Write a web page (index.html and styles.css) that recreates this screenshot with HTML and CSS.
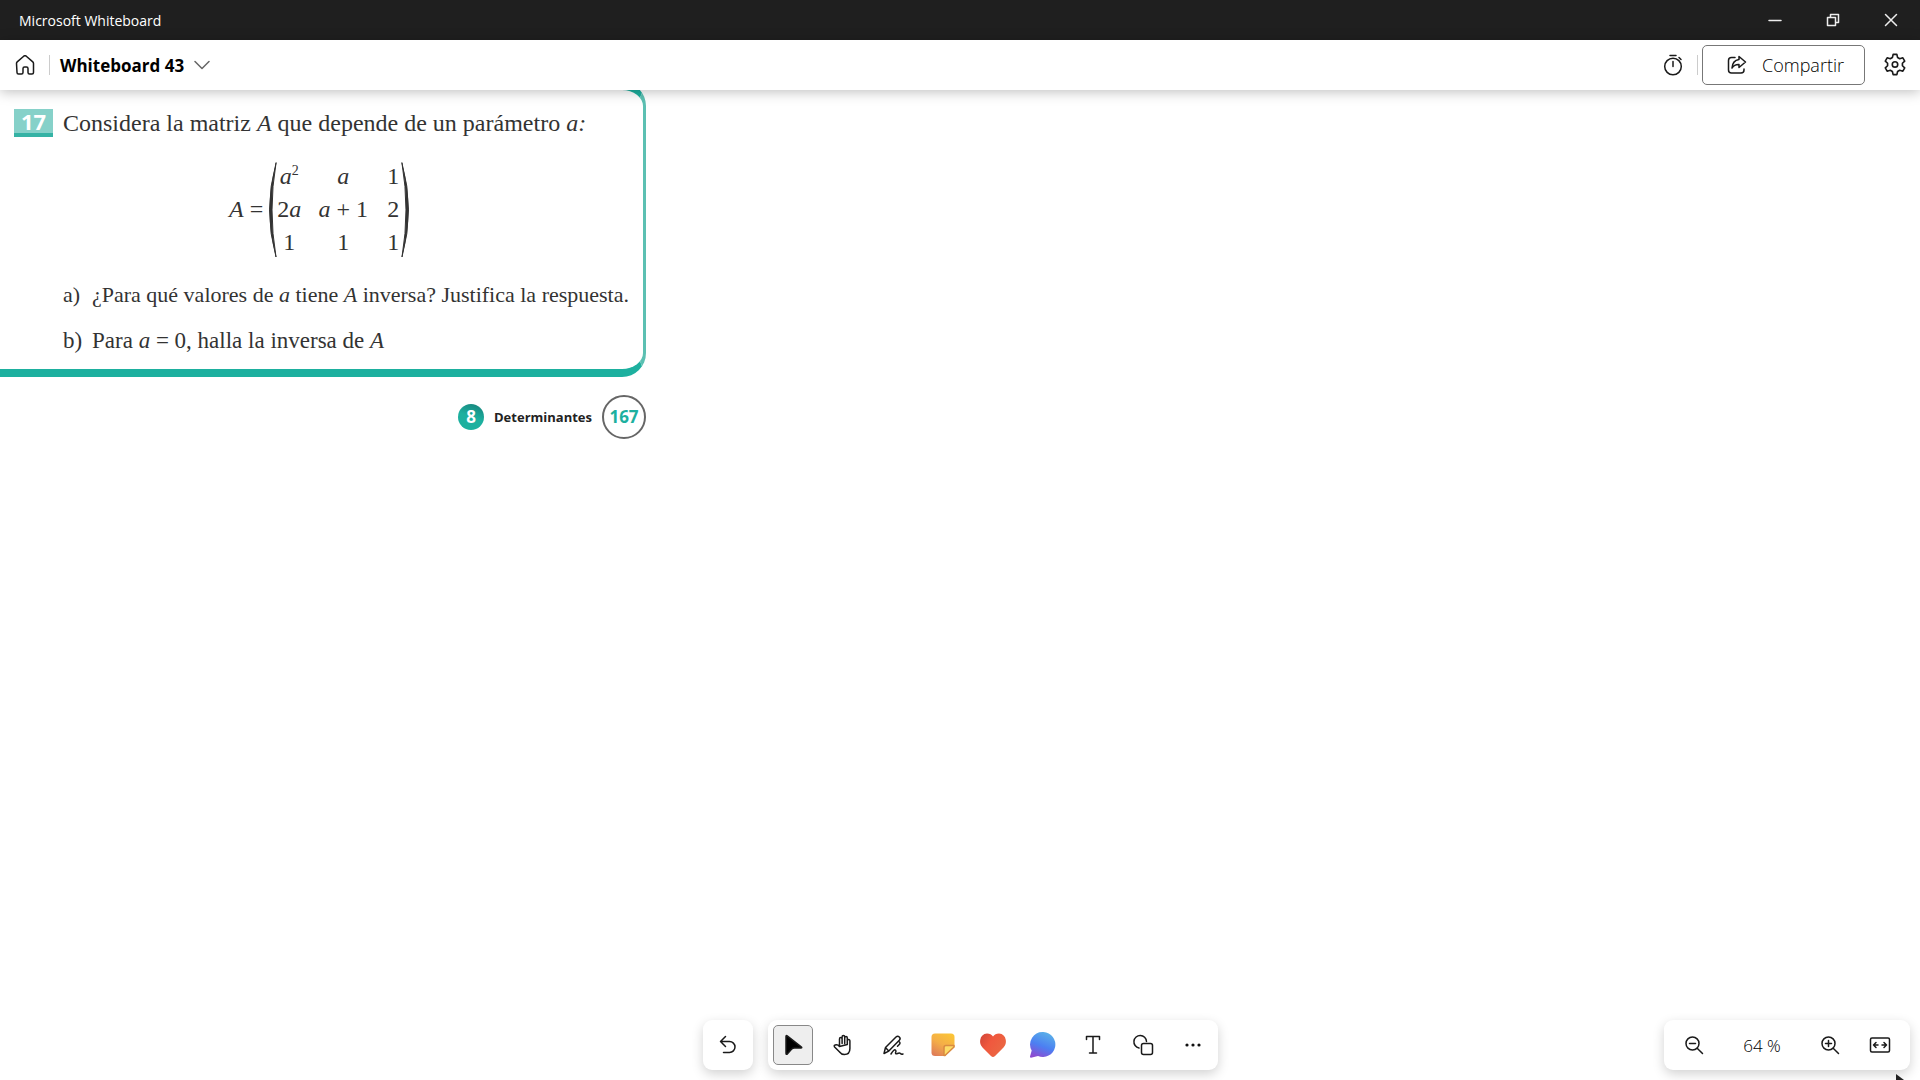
FILE: index.html
```
<!DOCTYPE html>
<html lang="es">
	<head>
	<meta charset="utf-8">
	<title>Microsoft Whiteboard</title>
	<link rel="stylesheet" href="styles.css">
	</head><body>
	<div class="titlebar">
		<span class="appname">Microsoft Whiteboard</span>
		<button class="win" aria-label="Minimizar"><svg width="14" height="14"><path d="M1 7.500h12"/></svg></button>
		<button class="win" aria-label="Restaurar"><svg width="14" height="14"><path d="M1.500 4.500h8v8h-8zM4.500 4v-2.500h8v8h-2.500"/></svg></button>
		<button class="win" aria-label="Cerrar"><svg width="14" height="14"><path d="M1.500 1.500l11 11M12.500 1.500l-11 11"/></svg></button>
	</div>
	<header class="header">
		<button class="btn" aria-label="Inicio"><svg width="20" height="20"><path d="M1.500 8.500q0-1 .7-1.600l6.500-5.700q1.300-1 2.600 0l6.500 5.700q.7.600.7 1.600v9q0 1.500-1.500 1.500h-2.500q-1.500 0-1.500-1.500v-4q0-1.500-1.500-1.500h-2q-1.500 0-1.500 1.500v4q0 1.500-1.500 1.500h-3q-1.500 0-1.500-1.500z"/></svg></button>
		<span class="sep"></span>
		<button class="boardname">Whiteboard 43
			<svg width="16" height="10"><path d="M1 1.500l7 7 7-7"/></svg></button>
		<span class="grow"></span>
		<button class="btn timer" aria-label="Temporizador"><svg width="22" height="22"><circle cx="11" cy="12.500" r="8.300"/><path d="M11 7.500v5M8 1.500h6M17 3.500l2 2"/></svg></button>
		<span class="sep"></span>
		<button class="share"><svg width="20" height="20"><path d="M8 2.500h-3.500q-3 0-3 3v9.500q0 3 3 3h9.500q3 0 3-3v-1M12 1.500l6.500 5.500-6.500 5.500v-3q-4.500-.3-7 3.500 .5-7.500 7-8.500z"/></svg>
			Compartir</button>
		<button class="btn gear" aria-label="Configuración"><svg width="24" height="24" viewBox="0 0 22 22"><path d="M9.300 1.300h3.400l.7 2.900 1.900 1.100 2.900-.9 1.700 3-2.100 2v2.300l2.100 2-1.700 3-2.900-.9-1.900 1.100-.7 2.900h-3.400l-.7-2.900-1.900-1.100-2.900.9-1.700-3 2.100-2v-2.300l-2.100-2 1.700-3 2.900.9 1.900-1.100z"/><circle cx="11" cy="10.500" r="2.500"/></svg></button>
	</header>
	<main class="canvas">
		<section class="sheet">
			<div class="exercise">
				<p class="line"><span class="num">17</span><span>Considera la matriz <i>A</i> que depende de un parámetro <i>a:</i></span></p>
				<div class="matrix">
					<span class="lhs"><i>A</i> =</span>
					<svg class="paren" width="9" height="96"><path d="M8 1q-13 47 0 94q-8-47 0-94z"/></svg>
					<div class="cells">
						<span><i>a</i><sup>2</sup></span><span><i>a</i></span><span>1</span>
						<span>2<i>a</i></span><span><i>a</i> + 1</span><span>2</span>
						<span>1</span><span>1</span><span>1</span>
					</div>
					<svg class="paren" width="9" height="96"><path d="M1 1q13 47 0 94q8-47 0-94z"/></svg>
				</div>
				<p class="line item tight"><span class="let">a)</span><span>¿Para qué valores de <i>a</i> tiene <i>A</i> inversa? Justifica la respuesta.</span></p>
				<p class="line item"><span class="let">b)</span><span>Para <i>a</i> = 0, halla la inversa de <i>A</i></span></p>
			</div>
			<div class="foot">
				<span class="unit">8</span>
				<b>Determinantes</b>
				<span class="page">167</span>
			</div>
		</section>
	</main>
	<div class="tools">
		<div class="panel">
			<button class="tool" aria-label="Deshacer"><svg width="20" height="20"><path d="M7.500 1.500l-5 5 5 5M2.500 6.500h9a5.500 5.500 0 0 1 0 11h-6"/></svg></button>
		</div>
		<div class="panel">
			<button class="tool on" aria-label="Seleccionar"><svg width="20" height="22"><path fill="#000" d="M3 2.500q0-1.500 1.200-.6l14 11q1.300 1-.4 1.200h-6.300q-2 0-3 1.200l-4 4.500q-1.500 1.200-1.500-.6z"/></svg></button>
			<button class="tool" aria-label="Mover"><svg width="20" height="22"><path d="M6.500 12.500v-7.500q0-1.500 1.300-1.500t1.300 1.500v4.500M9.100 9.500v-6.500q0-1.500 1.300-1.500t1.300 1.500v6.500M11.700 9.500v-5.500q0-1.500 1.300-1.500t1.300 1.500v6.500M14.300 10.500v-3.500q0-1.500 1.300-1.500t1.300 1.500v7.500q0 6-5.500 6-3 0-4.800-2.500l-5-5q-1-1.500.5-2 2.500-1 4.400 1.500z"/></svg></button>
			<button class="tool" aria-label="Lápiz"><svg width="22" height="22"><path d="M2 19.500l1.500-6 10.500-10.500q1.700-1.500 3.300 0t0 3.300l-10.500 10.800zM3.500 13.500l3.200 3.500M17 7.500q2 1.500 0 3.200l-1.500 1.500M9 20q3-5 4.500-4 1 .8 0 2.800 0 1.700 2 .7t3 0q.8 1 2.500.5"/></svg></button>
			<button class="tool" aria-label="Notas"><svg class="pic" width="26" height="26"><defs><linearGradient id="note" x1=".8" y1="0" x2=".2" y2="1"><stop offset="0" stop-color="#fbc436"/><stop offset=".5" stop-color="#f4ae48"/><stop offset="1" stop-color="#df7d58"/></linearGradient></defs><path fill="url(#note)" d="M5 1.500h16q3.500 0 3.500 3.500v10l-9.500 9h-10q-3.500 0-3.500-3.500v-15.500q0-3.500 3.500-3.500z"/><path fill="#fddb66" stroke="#d98b42" d="M14 23.500v-8q0-2 2-2h8v1.500l-9 8.500z"/></svg></button>
			<button class="tool" aria-label="Reacciones"><svg class="pic" width="28" height="26"><defs><linearGradient id="heart" x1="0" y1="0" x2="1" y2=".6"><stop offset="0" stop-color="#cf4538"/><stop offset=".45" stop-color="#f0583e"/><stop offset="1" stop-color="#ea6843"/></linearGradient></defs><path fill="url(#heart)" d="M14 25q-1 0-2-1l-8.500-8.500q-3-3.500-2.300-7.500 1-6 6.800-6.500 4 0 6 3 2-3 6-3 5.800.5 6.800 6.500.7 4-2.300 7.500l-8.500 8.500q-1 1-2 1z"/></svg></button>
			<button class="tool" aria-label="Comentario"><svg class="pic" width="28" height="28"><defs><linearGradient id="chat" x1=".7" y1="0" x2=".3" y2="1"><stop offset="0" stop-color="#5bb2e8"/><stop offset=".55" stop-color="#4c7ff2"/><stop offset="1" stop-color="#8d4bd0"/></linearGradient></defs><path fill="url(#chat)" d="M14.500 1a12.500 12.500 0 1 1-5.500 24l-7 1.700q-1.200 0-1-1.200l1.700-6a12.500 12.500 0 0 1 11.800-18.500z"/></svg></button>
			<button class="tool" aria-label="Texto"><svg width="20" height="22"><path d="M3.500 5.500v-3h13v3M10 2.500v16.500M6.500 19h7"/></svg></button>
			<button class="tool" aria-label="Formas"><svg width="22" height="22"><path d="M7 14a6.300 6.300 0 1 1 7.500-6.500"/><rect x="9.500" y="9.500" width="11" height="11" rx="2"/></svg></button>
			<button class="tool" aria-label="Más"><svg class="dots" width="20" height="20"><circle cx="4" cy="10" r="1.600"/><circle cx="10" cy="10" r="1.600"/><circle cx="16" cy="10" r="1.600"/></svg></button>
		</div>
	</div>
	<div class="panel zoom">
		<button class="tool" aria-label="Alejar"><svg width="20" height="20"><circle cx="8.500" cy="8.500" r="6.500"/><path d="M13.200 13.200l5.300 5.300M5.500 8.500h6"/></svg></button>
		<span class="pct">64 %</span>
		<button class="tool" aria-label="Acercar"><svg width="20" height="20"><circle cx="8.500" cy="8.500" r="6.500"/><path d="M13.200 13.200l5.300 5.300M5.500 8.500h6M8.500 5.500v6"/></svg></button>
		<button class="tool" aria-label="Ajustar"><svg width="22" height="20"><rect x="1.500" y="3" width="19" height="14" rx="1.500"/><path d="M9 10h-4.500M7 7.500l-2.500 2.500 2.500 2.500M13 10h4.500M15 7.500l2.500 2.500-2.500 2.500"/></svg></button>
	</div>
	<svg class="cursor" width="12" height="6"><path d="M1 0l8 6h-8z"/></svg>
	</body>
</html>
```

FILE: styles.css
```
* {
	box-sizing: border-box;
}
body {
	margin: 0;
	height: 100vh;
	display: flex;
	flex-direction: column;
	overflow: hidden;
	background: #fff;
	color: #000;
	font-family: "Open Sans", "Noto Sans", sans-serif;
}
button {
	padding: 0;
	border: 0;
	background: none;
	color: inherit;
	font-family: inherit;
	display: flex;
	align-items: center;
	justify-content: center;
}
svg {
	display: block;
	flex: none;
	fill: none;
	stroke: #1a1a1a;
	stroke-width: 1.5;
	stroke-linejoin: round;
	stroke-linecap: round;
}

/* window title */
.titlebar {
	display: flex;
	height: 40px;
	flex: none;
	align-items: center;
	padding-left: 19px;
	background: #1f1f1f;
	color: #fff;
}
.appname {
	flex: 1;
	font-size: 14px;
}
.win {
	width: 58px;
	height: 40px;
}
.win svg {
	stroke: #eee;
}

/* board header */
.header {
	position: relative;
	z-index: 1;
	display: flex;
	height: 50px;
	flex: none;
	align-items: center;
	padding: 0 5px;
	background: #fff;
	box-shadow: 0 2px 12px rgba(0, 0, 0, 0.25);
}
.btn {
	width: 40px;
	height: 40px;
}
.sep {
	width: 1px;
	height: 20px;
	margin: 0 4px;
	background: #ccc;
}
.boardname {
	gap: 10px;
	margin-left: 6px;
	font-size: 17px;
	font-weight: bold;
}
.boardname svg {
	stroke: #666;
}
.grow {
	flex: 1;
}
.share {
	gap: 15px;
	width: 163px;
	height: 40px;
	padding-left: 4px;
	border: 1px solid #777;
	border-radius: 5px;
	font-size: 18px;
	font-weight: 300;
}
.gear {
	margin-left: 10px;
}

/* pasted exercise */
.canvas {
	flex: 1;
	overflow: hidden;
}
.sheet {
	width: 646px;
	margin-top: -8px;
	font-family: "Liberation Serif", serif;
	font-size: 24px;
	color: #333;
}
.exercise {
	padding: 19px 0 14px;
	border: solid #1db09f;
	border-width: 8px 3px 8px 0;
	border-right-color: #5cc0b2;
	border-radius: 0 24px 24px 0;
}
.line {
	display: flex;
	align-items: center;
	height: 28px;
	margin: 0;
	white-space: nowrap;
}
.num {
	width: 39px;
	height: 28px;
	margin: 0 10px 0 14px;
	border-bottom: 4px solid #35b3a5;
	background: #86d1c9;
	color: #fff;
	font: bold 22px/24px "Open Sans", sans-serif;
	text-align: center;
}
.matrix {
	display: flex;
	align-items: center;
	margin: 23px 0 22px 229px;
}
.lhs {
	margin-right: 5px;
}
.paren {
	fill: #333;
	stroke: #333;
	stroke-width: 1;
}
.cells {
	display: grid;
	grid-template-columns: 24px 50px 16px;
	grid-auto-rows: 33px;
	column-gap: 17px;
	line-height: 33px;
	text-align: center;
	white-space: nowrap;
}
.cells sup {
	font-size: 14px;
	line-height: 0;
}
.item {
	padding-left: 63px;
	margin-bottom: 18px;
	font-size: 23px;
}
.tight {
	font-size: 22px;
}
.let {
	width: 29px;
	flex: none;
}
.item:last-child {
	margin-bottom: 0;
}
.foot {
	display: flex;
	align-items: center;
	justify-content: flex-end;
	gap: 10px;
	margin-top: 18px;
	font-family: "Open Sans", sans-serif;
	font-size: 13px;
	color: #222;
}
.unit {
	width: 26px;
	border-radius: 50%;
	background: linear-gradient(200deg, #167f78, #1db09f 50%);
	color: #fff;
	font-size: 17px;
	font-weight: bold;
	line-height: 26px;
	text-align: center;
}
.page {
	width: 44px;
	border: 2px solid #666;
	border-radius: 50%;
	color: #1db09f;
	font-size: 17px;
	font-weight: bold;
	line-height: 40px;
	text-align: center;
}

/* floating panels */
.panel {
	display: flex;
	align-items: center;
	gap: 10px;
	padding: 5px;
	border-radius: 9px;
	background: #fff;
	box-shadow: 0 4px 12px rgba(0, 0, 0, 0.18);
}
.tools {
	position: absolute;
	left: 0;
	right: 0;
	bottom: 10px;
	display: flex;
	justify-content: center;
	gap: 15px;
}
.tool {
	width: 40px;
	height: 40px;
}
.on {
	border: 1px solid #888;
	border-radius: 5px;
	background: #eee;
}
.pic {
	stroke: none;
}
.dots {
	fill: #111;
	stroke: none;
}
.zoom {
	position: absolute;
	right: 10px;
	bottom: 10px;
	padding: 5px 10px;
}
.pct {
	width: 76px;
	font-size: 17px;
	font-weight: 300;
	text-align: center;
}
.cursor {
	position: absolute;
	right: 13px;
	bottom: 0;
	fill: #222;
	stroke: none;
}
```
